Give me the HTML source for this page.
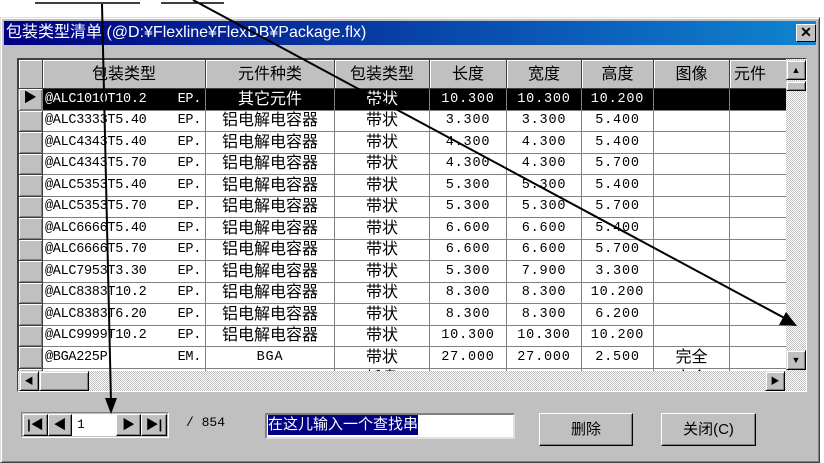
<!DOCTYPE html>
<html><head><meta charset="utf-8"><style>
*{margin:0;padding:0;box-sizing:border-box}
body{width:824px;height:463px;background:#fff;position:relative;overflow:hidden;font-family:"Liberation Sans","Noto Sans CJK SC",sans-serif}
.win{position:absolute;left:0;top:17px;width:820px;height:446px;background:#c0c0c0;border:1px solid #dfdfdf;border-right-color:#404040;border-bottom-color:#404040;box-shadow:inset 1px 1px #fff,inset -1px -1px #808080}
.title{position:absolute;left:3px;top:3px;width:812px;height:24px;background:linear-gradient(90deg,#000080,#1084d0);color:#fff;font-size:16px;line-height:24px;padding-left:2px;font-family:"Liberation Sans","Noto Sans CJK SC",sans-serif}
.x{position:absolute;left:795px;top:6px;width:20px;height:18px;background:#c0c0c0;border:1px solid #fff;border-right-color:#000;border-bottom-color:#000;font-size:14px;line-height:15px;text-align:center;color:#000;font-weight:bold}
.grid{position:absolute;left:17px;top:58px;width:790px;height:334px;border:1px solid #404040;border-right-color:#fff;border-bottom-color:#fff;background:#c0c0c0;overflow:hidden}
table{position:absolute;left:0;top:0;border-collapse:collapse;table-layout:fixed;font-size:14px}
td{height:21.5px;border:1px solid #808080;background:#fff;text-align:center;white-space:nowrap;overflow:hidden;padding:0;line-height:19px;font-family:"Liberation Mono","Noto Sans CJK SC",monospace;font-size:13.5px;letter-spacing:0.8px}
td.cn{font-family:"Liberation Sans","Noto Sans CJK SC",sans-serif;font-size:16px;letter-spacing:0}
tr.h td{background:#c0c0c0;height:29px;border-color:#404040;box-shadow:inset 1px 1px #fff;font-family:"Liberation Sans","Noto Sans CJK SC",sans-serif;font-size:16px;letter-spacing:0}
td.ind{background:#c0c0c0;box-shadow:inset 1px 1px #fff,inset -1px -1px #808080;border-color:#404040}
td.l{text-align:left;padding-left:2px;letter-spacing:-0.3px}
tr.sel td{background:#000;color:#fff;border-color:#808080}
tr.sel td.ind{background:#c0c0c0;color:#000}
.btn{position:absolute;background:#c0c0c0;border:1px solid #fff;border-right-color:#000;border-bottom-color:#000;box-shadow:inset -1px -1px #808080;text-align:center;font-size:15px}
.sb{position:absolute;background:repeating-conic-gradient(#c0c0c0 0 25%,#fff 0 50%) 0 0/2px 2px}
.sbtn{position:absolute;width:20px;height:20px;background:#c0c0c0;border:1px solid #dfdfdf;border-right-color:#000;border-bottom-color:#000;box-shadow:inset 1px 1px #fff,inset -1px -1px #808080;font-size:9px;line-height:18px;text-align:center}
</style></head><body>
<div class="win">
<div class="title">包装类型清单 (@D:¥Flexline¥FlexDB¥Package.flx)</div>
<div class="x">✕</div>
</div>
<div class="grid">
<table>
<colgroup><col style="width:24px"><col style="width:163px"><col style="width:129px"><col style="width:95px"><col style="width:77px"><col style="width:75px"><col style="width:72px"><col style="width:76px"><col style="width:60px"></colgroup>
<tr class="h"><td class="ind"></td><td>包装类型</td><td>元件种类</td><td>包装类型</td><td>长度</td><td>宽度</td><td>高度</td><td>图像</td><td style="text-align:left;padding-left:4px">元件</td></tr>
<tr class="sel"><td class="ind">▶</td><td class="l">@ALC1010T10.2&nbsp;&nbsp;&nbsp;&nbsp;EP.</td><td class="cn">其它元件</td><td class="cn">带状</td><td>10.300</td><td>10.300</td><td>10.200</td><td></td><td></td></tr>
<tr><td class="ind"></td><td class="l">@ALC3333T5.40&nbsp;&nbsp;&nbsp;&nbsp;EP.</td><td class="cn">铝电解电容器</td><td class="cn">带状</td><td>3.300</td><td>3.300</td><td>5.400</td><td></td><td></td></tr>
<tr><td class="ind"></td><td class="l">@ALC4343T5.40&nbsp;&nbsp;&nbsp;&nbsp;EP.</td><td class="cn">铝电解电容器</td><td class="cn">带状</td><td>4.300</td><td>4.300</td><td>5.400</td><td></td><td></td></tr>
<tr><td class="ind"></td><td class="l">@ALC4343T5.70&nbsp;&nbsp;&nbsp;&nbsp;EP.</td><td class="cn">铝电解电容器</td><td class="cn">带状</td><td>4.300</td><td>4.300</td><td>5.700</td><td></td><td></td></tr>
<tr><td class="ind"></td><td class="l">@ALC5353T5.40&nbsp;&nbsp;&nbsp;&nbsp;EP.</td><td class="cn">铝电解电容器</td><td class="cn">带状</td><td>5.300</td><td>5.300</td><td>5.400</td><td></td><td></td></tr>
<tr><td class="ind"></td><td class="l">@ALC5353T5.70&nbsp;&nbsp;&nbsp;&nbsp;EP.</td><td class="cn">铝电解电容器</td><td class="cn">带状</td><td>5.300</td><td>5.300</td><td>5.700</td><td></td><td></td></tr>
<tr><td class="ind"></td><td class="l">@ALC6666T5.40&nbsp;&nbsp;&nbsp;&nbsp;EP.</td><td class="cn">铝电解电容器</td><td class="cn">带状</td><td>6.600</td><td>6.600</td><td>5.400</td><td></td><td></td></tr>
<tr><td class="ind"></td><td class="l">@ALC6666T5.70&nbsp;&nbsp;&nbsp;&nbsp;EP.</td><td class="cn">铝电解电容器</td><td class="cn">带状</td><td>6.600</td><td>6.600</td><td>5.700</td><td></td><td></td></tr>
<tr><td class="ind"></td><td class="l">@ALC7953T3.30&nbsp;&nbsp;&nbsp;&nbsp;EP.</td><td class="cn">铝电解电容器</td><td class="cn">带状</td><td>5.300</td><td>7.900</td><td>3.300</td><td></td><td></td></tr>
<tr><td class="ind"></td><td class="l">@ALC8383T10.2&nbsp;&nbsp;&nbsp;&nbsp;EP.</td><td class="cn">铝电解电容器</td><td class="cn">带状</td><td>8.300</td><td>8.300</td><td>10.200</td><td></td><td></td></tr>
<tr><td class="ind"></td><td class="l">@ALC8383T6.20&nbsp;&nbsp;&nbsp;&nbsp;EP.</td><td class="cn">铝电解电容器</td><td class="cn">带状</td><td>8.300</td><td>8.300</td><td>6.200</td><td></td><td></td></tr>
<tr><td class="ind"></td><td class="l">@ALC9999T10.2&nbsp;&nbsp;&nbsp;&nbsp;EP.</td><td class="cn">铝电解电容器</td><td class="cn">带状</td><td>10.300</td><td>10.300</td><td>10.200</td><td></td><td></td></tr>
<tr><td class="ind"></td><td class="l">@BGA225P&nbsp;&nbsp;&nbsp;&nbsp;&nbsp;&nbsp;&nbsp;&nbsp;&nbsp;EM.</td><td>BGA</td><td class="cn">带状</td><td>27.000</td><td>27.000</td><td>2.500</td><td class="cn">完全</td><td></td></tr>
<tr><td class="ind"></td><td class="l">@BGA225P&nbsp;&nbsp;&nbsp;&nbsp;&nbsp;&nbsp;&nbsp;&nbsp;&nbsp;EM.</td><td>BGA</td><td class="cn">托盘</td><td>27.000</td><td>27.000</td><td>2.500</td><td class="cn">完全</td><td></td></tr>
</table>
<div class="sb" style="left:768px;top:0;width:21px;height:312px"></div>
<div class="sbtn" style="left:768px;top:1px">▲</div>
<div class="sbtn" style="left:768px;top:22px;height:10px"></div>
<div class="sbtn" style="left:768px;top:291px">▼</div>
<div class="sb" style="left:0;top:312px;width:789px;height:21px"></div>
<div class="sbtn" style="left:1px;top:312px">◀</div>
<div class="sbtn" style="left:21px;top:312px;width:50px"></div>
<div class="sbtn" style="left:747px;top:312px">▶</div>
</div>
<div style="position:absolute;left:21px;top:412px;width:148px;height:26px;border:1px solid #808080;border-right-color:#fff;border-bottom-color:#fff"></div>
<div class="btn" style="left:23px;top:414px;width:25px;height:22px;font-size:13px;line-height:20px;font-weight:bold">|◀</div>
<div class="btn" style="left:48px;top:414px;width:24px;height:22px;font-size:13px;line-height:20px">◀</div>
<div style="position:absolute;left:72px;top:414px;width:44px;height:22px;background:#fff;font-size:13px;line-height:22px;padding-left:5px;font-family:'Liberation Mono',monospace">1</div>
<div class="btn" style="left:116px;top:414px;width:25px;height:22px;font-size:13px;line-height:20px">▶</div>
<div class="btn" style="left:141px;top:414px;width:26px;height:22px;font-size:13px;line-height:20px;font-weight:bold">▶|</div>
<div style="position:absolute;left:186px;top:415px;font-size:13px;font-family:'Liberation Mono',monospace">/ 854</div>
<div style="position:absolute;left:265px;top:413px;width:250px;height:26px;background:#fff;border:2px solid #808080;border-right-color:#dfdfdf;border-bottom-color:#dfdfdf"><span style="background:#000080;color:#fff;font-size:15px;line-height:20px;margin-left:1px;display:inline-block">在这儿输入一个查找串</span></div>
<div class="btn" style="left:539px;top:413px;width:94px;height:33px;line-height:31px">删除</div>
<div class="btn" style="left:661px;top:413px;width:95px;height:33px;line-height:31px">关闭(C)</div>
<svg width="824" height="463" style="position:absolute;left:0;top:0">
<line x1="35" y1="3" x2="140" y2="3" stroke="#000" stroke-width="1.5"/>
<line x1="161" y1="3" x2="224" y2="3" stroke="#000" stroke-width="1.5"/>
<line x1="102" y1="4" x2="111" y2="402" stroke="#000" stroke-width="2"/>
<polygon points="105,398 117,398 111,414" fill="#000"/>
<line x1="193" y1="0" x2="790" y2="321" stroke="#000" stroke-width="2"/>
<polygon points="786,312 797,326 779,325" fill="#000"/>
</svg>
</body></html>
